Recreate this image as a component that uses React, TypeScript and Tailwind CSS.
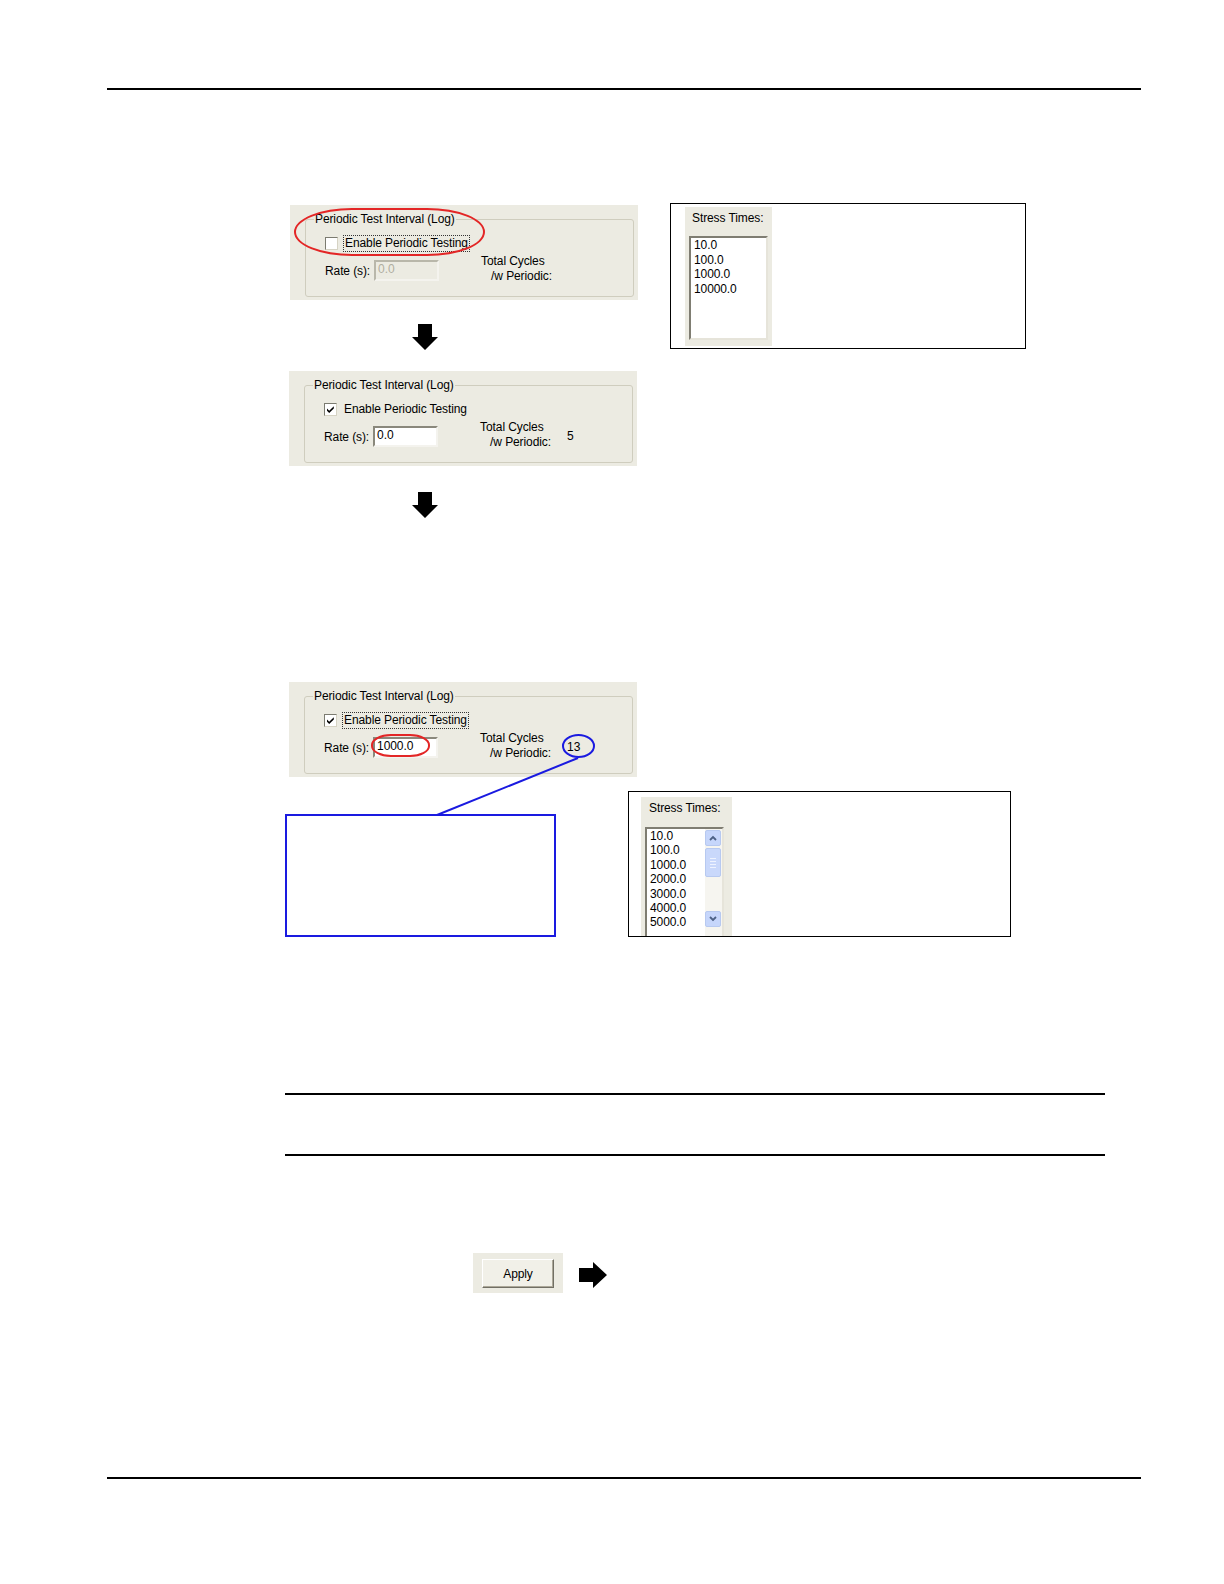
import React from "react";

type PanelProps = {
  enabled: boolean;
  rate: string;
  total?: string;
  focus?: boolean;
  children?: React.ReactNode;
};

function CheckBox({ checked }: { checked: boolean }) {
  return (
    <span className="flex h-[13px] w-[13px] shrink-0 items-center justify-center border border-t-[#7b7b70] border-l-[#7b7b70] border-r-[#d6d3c4] border-b-[#d6d3c4] bg-white">
      {checked && (
        <svg width="9" height="9" viewBox="0 0 9 9">
          <path d="M1 3.6 3.2 5.8 7.8 1.2V3.4L3.2 8 1 5.8Z" fill="#000" />
        </svg>
      )}
    </span>
  );
}

function PeriodicPanel({ enabled, rate, total, focus, children }: PanelProps) {
  return (
    <div className="relative h-[95px] w-[348px] bg-[#ecebe2] pt-[14px]">
      <div className="relative ml-[15px] mr-[4px] h-[78px] rounded-[3px] border border-[#cfcdbe]">
        <span className="absolute -top-[8px] left-[8px] bg-[#ecebe2] px-[1px] leading-[15px]">
          Periodic Test Interval (Log)
        </span>
        <div className="pl-[19px] pt-[17px]">
          <div className="flex h-[13px] items-center gap-[5px]">
            <CheckBox checked={enabled} />
            <span
              className={
                focus
                  ? "border border-dotted border-[#333] px-[1px] leading-[15px]"
                  : "border border-transparent px-[1px] leading-[15px]"
              }
            >
              Enable Periodic Testing
            </span>
          </div>
          <div className="mt-[10px] flex items-start">
            <span className="mt-[4px] leading-[15px]">Rate (s):</span>
            <div
              className={
                enabled
                  ? "ml-[4px] h-[21px] w-[65px] border-2 border-t-[#8a887c] border-l-[#8a887c] border-r-[#f4f3ee] border-b-[#f4f3ee] bg-white px-[2px] leading-[15px] text-black"
                  : "ml-[4px] h-[21px] w-[65px] border-2 border-t-[#b9b7aa] border-l-[#b9b7aa] border-r-[#f4f3ee] border-b-[#f4f3ee] bg-[#ecebe2] px-[2px] leading-[15px] text-[#b0ae9f]"
              }
            >
              {rate}
            </div>
            <div className="-mt-[6px] ml-[42px] w-[74px] leading-[14.5px]">
              <div>Total Cycles</div>
              <div className="pl-[10px]">/w Periodic:</div>
            </div>
            {total && <span className="ml-[13px] mt-[3px] leading-[15px]">{total}</span>}
          </div>
        </div>
      </div>
      {children}
    </div>
  );
}

function ScrollButton({ up }: { up: boolean }) {
  return (
    <div className="flex h-[16px] w-[16px] items-center justify-center rounded-[2px] border border-[#b7c9f0] bg-[#c6d6fb]">
      <svg width="8" height="6" viewBox="0 0 8 6">
        <path
          d={up ? "M1 5 4 2 7 5" : "M1 1 4 4 7 1"}
          fill="none"
          stroke="#4d6185"
          strokeWidth="1.8"
        />
      </svg>
    </div>
  );
}

function StressBox({ items, scroll }: { items: string[]; scroll?: boolean }) {
  if (!scroll) {
    return (
      <div className="h-[146px] w-[356px] border border-black bg-white">
        <div className="ml-[14px] mt-[3px] h-[139px] w-[87px] bg-[#ecebe2] pt-[4px]">
          <div className="pl-[7px] leading-[15px]">Stress Times:</div>
          <div className="ml-[4px] mt-[10px] h-[104px] w-[79px] border-2 border-t-[#7f7d72] border-l-[#7f7d72] border-r-[#e6e4da] border-b-[#e6e4da] bg-white pl-[3px] leading-[14.5px]">
            {items.map((v) => (
              <div key={v}>{v}</div>
            ))}
          </div>
        </div>
      </div>
    );
  }
  return (
    <div className="h-[146px] w-[383px] border border-black bg-white">
      <div className="ml-[12px] mt-[5px] h-[139px] w-[91px] overflow-hidden bg-[#ecebe2] pt-[4px]">
        <div className="pl-[8px] leading-[15px]">Stress Times:</div>
        <div className="ml-[4px] mt-[11px] flex h-[112px] w-[79px] border-2 border-t-[#7f7d72] border-l-[#7f7d72] border-r-[#e6e4da] border-b-[#e6e4da] bg-white">
          <div className="flex-1 pl-[3px] leading-[14.4px]">
            {items.map((v) => (
              <div key={v}>{v}</div>
            ))}
          </div>
          <div className="flex w-[17px] flex-col bg-[#f6f5f0] pt-[1px]">
            <ScrollButton up />
            <div className="mt-[2px] flex h-[29px] w-[16px] flex-col items-center justify-center gap-[2px] rounded-[2px] border border-[#b7c9f0] bg-[#c9d8fb]">
              <span className="h-px w-[6px] bg-[#eef3ff]" />
              <span className="h-px w-[6px] bg-[#eef3ff]" />
              <span className="h-px w-[6px] bg-[#eef3ff]" />
              <span className="h-px w-[6px] bg-[#eef3ff]" />
            </div>
            <div className="h-[34px]" />
            <ScrollButton up={false} />
          </div>
        </div>
      </div>
    </div>
  );
}

function DownArrow() {
  return (
    <svg width="26" height="26" viewBox="0 0 26 26">
      <path d="M6 0h14v13h6L13 26 0 13h6Z" fill="#000" />
    </svg>
  );
}

function RightArrow() {
  return (
    <svg width="28" height="26" viewBox="0 0 28 26">
      <path d="M0 6h14V0l14 13-14 13v-6H0Z" fill="#000" />
    </svg>
  );
}

export default function App() {
  return (
    <div className="relative flow-root h-[1584px] w-[1224px] overflow-hidden bg-white font-['Liberation_Sans',Arial,sans-serif] text-[12px] tracking-[-0.1px] text-black">
      <div className="ml-[107px] mt-[88px] h-[2px] w-[1034px] bg-black" />

      <div className="mt-[113px] flex items-start pl-[290px]">
        <div className="flex flex-col">
          <div className="mt-[2px]">
            <PeriodicPanel enabled={false} rate="0.0" focus>
              <div className="absolute left-[4px] top-[3px] h-[48px] w-[191px] rounded-[58px/24px] border-2 border-[#e32626]" />
            </PeriodicPanel>
          </div>
          <div className="ml-[122px] mt-[24px]">
            <DownArrow />
          </div>
          <div className="-ml-px mt-[21px]">
            <PeriodicPanel enabled rate="0.0" total="5" />
          </div>
          <div className="ml-[122px] mt-[26px]">
            <DownArrow />
          </div>
        </div>
        <div className="ml-[32px]">
          <StressBox items={["10.0", "100.0", "1000.0", "10000.0"]} />
        </div>
      </div>

      <div className="ml-[289px] mt-[164px]">
        <PeriodicPanel enabled rate="1000.0" total="13" focus>
          <div className="absolute left-[82px] top-[52px] h-[23px] w-[59px] rounded-[20px/11px] border-2 border-[#e32626]" />
          <div className="absolute left-[273px] top-[52px] h-[24px] w-[33px] rounded-[50%] border-2 border-[#1a1ae0]" />
        </PeriodicPanel>
      </div>

      <div className="mt-[14px] flex items-end">
        <div className="ml-[285px] h-[123px] w-[271px] border-2 border-[#1a1ae0]" />
        <div className="ml-[72px]">
          <StressBox
            scroll
            items={["10.0", "100.0", "1000.0", "2000.0", "3000.0", "4000.0", "5000.0"]}
          />
        </div>
      </div>

      <div className="ml-[285px] mt-[156px] h-[2px] w-[820px] bg-black" />
      <div className="ml-[285px] mt-[59px] h-[2px] w-[820px] bg-black" />

      <div className="ml-[473px] mt-[97px] flex items-start">
        <div className="h-[40px] w-[90px] bg-[#ecebe2] pl-[9px] pt-[6px]">
          <div className="flex h-[29px] w-[72px] items-center justify-center border border-t-white border-l-white border-r-[#716f64] border-b-[#716f64] bg-[#f1f0e8] shadow-[inset_-1px_-1px_0_#aca899]">
            Apply
          </div>
        </div>
        <div className="ml-[16px] mt-[9px]">
          <RightArrow />
        </div>
      </div>

      <div className="ml-[107px] mt-[184px] h-[2px] w-[1034px] bg-black" />

      <svg className="pointer-events-none absolute left-0 top-0" width="1224" height="1584">
        <line x1="578" y1="758" x2="437" y2="815" stroke="#1a1ae0" strokeWidth="2" />
      </svg>
    </div>
  );
}
